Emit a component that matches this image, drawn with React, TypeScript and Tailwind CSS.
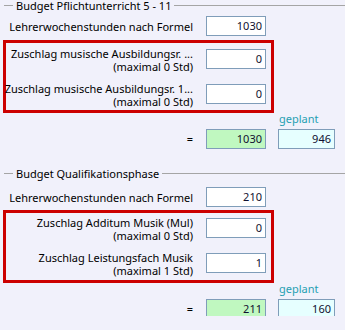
import React from 'react';

const font = "font-['Noto_Sans',sans-serif]";

function GroupTitle({ text, className = '' }: { text: string; className?: string }) {
  return (
    <div className={`flex h-[11px] items-center ${className}`}>
      <div className="ml-[4px] h-px w-[9px] bg-[#a5a5a5]" />
      <span className="whitespace-nowrap px-[3px] text-[11px] leading-[14px] text-black">{text}</span>
      <div className="h-px flex-1 bg-[#a5a5a5]" />
    </div>
  );
}

function Field({ value, tone = 'white', width = 'w-[60px]' }: { value: string; tone?: 'white' | 'green' | 'blue'; width?: string }) {
  const bg = tone === 'green' ? 'bg-[#c0f8c0]' : tone === 'blue' ? 'bg-[#e6ffff]' : 'bg-white';
  return (
    <div className={`h-[20px] ${width} shrink-0 border border-[#7f9db9] ${bg} pr-[3px] text-right text-[11px] leading-[18px] text-[#101030]`}>
      {value}
    </div>
  );
}

function FormulaRow({ value }: { value: string }) {
  return (
    <div className="flex items-start">
      <div className="mt-[4px] flex w-[193px] justify-end whitespace-nowrap text-[11px] leading-[14px]">
        Lehrerwochenstunden nach Formel
      </div>
      <div className="ml-[13px]">
        <Field value={value} />
      </div>
    </div>
  );
}

function ExtraRow({ label, limit, value }: { label: string; limit: string; value: string }) {
  return (
    <div className="flex items-start">
      <div className="flex w-[187px] flex-col items-end whitespace-nowrap text-[11px] leading-[13px]">
        <span>{label}</span>
        <span>{limit}</span>
      </div>
      <div className="ml-[13px] mt-[2px]">
        <Field value={value} />
      </div>
    </div>
  );
}

function Totals({ total, planned, className = '' }: { total: string; planned: string; className?: string }) {
  return (
    <div className={className}>
      <div className="ml-[279px] text-[11px] leading-[12px] text-[#26a0b2]">geplant</div>
      <div className="mt-[4px] flex items-center">
        <div className="flex w-[193px] justify-end text-[11px] leading-[14px]">=</div>
        <div className="ml-[13px]">
          <Field value={total} tone="green" />
        </div>
        <div className="ml-[12px]">
          <Field value={planned} tone="blue" width="w-[57px]" />
        </div>
      </div>
    </div>
  );
}

export default function App() {
  return (
    <div className={`h-[330px] w-[345px] bg-[#f1f1fb] text-black ${font}`}>
      <div className="h-[316px] overflow-hidden">
        {/* Budget Pflichtunterricht */}
        <GroupTitle text="Budget Pflichtunterricht 5 - 11" />
        <div className="mt-[5px]">
          <FormulaRow value="1030" />
        </div>
        <div className="ml-[3px] mt-[4px] w-[271px] border-[3px] border-[#cc0000] pb-[2px] pt-[4px]">
          <div className="flex flex-col gap-[9px]">
            <ExtraRow label="Zuschlag musische Ausbildungsr. ..." limit="(maximal 0 Std)" value="0" />
            <ExtraRow label="Zuschlag musische Ausbildungsr. 1..." limit="(maximal 0 Std)" value="0" />
          </div>
        </div>
        <Totals total="1030" planned="946" />

        {/* Budget Qualifikationsphase */}
        <GroupTitle text="Budget Qualifikationsphase" className="mt-[19px]" />
        <div className="mt-[8px]">
          <FormulaRow value="210" />
        </div>
        <div className="ml-[3px] mt-[3px] w-[271px] border-[3px] border-[#cc0000] pb-[3px] pt-[3px]">
          <div className="flex flex-col gap-[9px]">
            <ExtraRow label="Zuschlag Additum Musik (Mul)" limit="(maximal 0 Std)" value="0" />
            <ExtraRow label="Zuschlag Leistungsfach Musik" limit="(maximal 1 Std)" value="1" />
          </div>
        </div>
        <Totals total="211" planned="160" />
      </div>
    </div>
  );
}
